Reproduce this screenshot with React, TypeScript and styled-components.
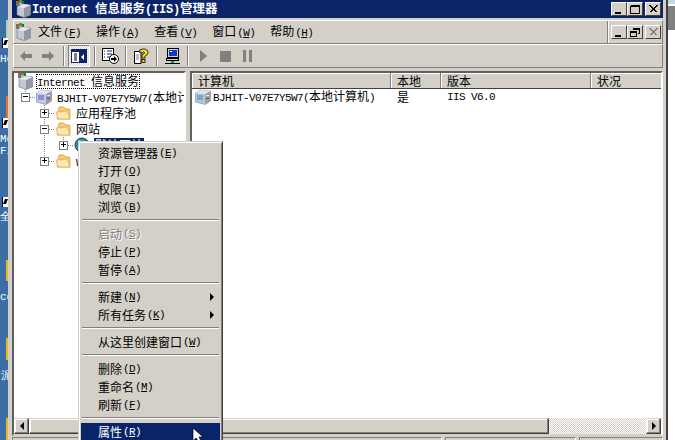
import React from "react";
import styled, { createGlobalStyle } from "styled-components";

const GlobalStyle = createGlobalStyle`
  html, body {
    margin: 0;
    padding: 0;
    background: #fff;
    overflow: hidden;
  }
  body {
    font-family: "Noto Sans CJK SC", "Liberation Sans", sans-serif;
    font-size: 12px;
    color: #000;
  }
  svg {
    flex: none;
  }
`;

const Screen = styled.div`
  position: relative;
  width: 675px;
  height: 440px;
  display: flex;
  overflow: hidden;
`;

const Desktop = styled.div`
  position: relative;
  width: 8px;
  flex: none;
  background: #3a6ea5;
  overflow: hidden;
`;

const DesktopLabel = styled.span<{ $top: number; $left?: number }>`
  position: absolute;
  top: ${(p) => p.$top}px;
  left: ${(p) => p.$left ?? 0}px;
  color: #fff;
  font-family: "Liberation Mono", monospace;
  font-size: 11px;
  line-height: 12px;
  white-space: nowrap;
`;

const DesktopIcon = styled.div<{ $top: number; $h: number; $color: string }>`
  position: absolute;
  top: ${(p) => p.$top}px;
  left: 6px;
  width: 2px;
  height: ${(p) => p.$h}px;
  background: ${(p) => p.$color};
`;

const Shortcut = styled.div<{ $top: number }>`
  position: absolute;
  top: ${(p) => p.$top}px;
  left: 2px;
  width: 6px;
  height: 10px;
  background: #fff;
  border-left: 1px solid #000;
  box-sizing: border-box;
  &::after {
    content: "";
    position: absolute;
    left: 1px;
    top: 2px;
    width: 3px;
    height: 5px;
    background: #000;
    transform: skewX(-20deg);
  }
`;

const RightEdge = styled.div`
  flex: 1;
  background: #fff;
  display: flex;
  flex-direction: column;
`;

const EdgeBlue = styled.div`
  height: 4px;
  background: #c9d6ea;
`;

const EdgeGray = styled.div`
  height: 24px;
  margin-top: 2px;
  background: #808080;
`;

const Window = styled.div`
  width: 660px;
  flex: none;
  box-sizing: border-box;
  padding: 0 3px 0 4px;
  background: #d4d0c8;
  border-right: 2px solid #404040;
  display: flex;
  flex-direction: column;
`;

const TitleBar = styled.div`
  height: 18px;
  flex: none;
  background: #0a246a;
  display: flex;
  align-items: center;
  padding: 0 2px 0 3px;
`;

const TitleText = styled.span`
  margin-left: 1px;
  color: #fff;
  font-weight: 700;
  font-size: 12.5px;
  line-height: 18px;
  white-space: nowrap;
`;

const TitleLatin = styled.span`
  font-family: "Liberation Mono", monospace;
  font-size: 12px;
  font-weight: 700;
  letter-spacing: -0.2px;
`;

const CaptionButtons = styled.div`
  margin-left: auto;
  display: flex;
`;

const CaptionButton = styled.div<{ $gap?: boolean }>`
  width: 16px;
  height: 14px;
  box-sizing: border-box;
  margin-left: ${(p) => (p.$gap ? 2 : 0)}px;
  background: #d4d0c8;
  border: 1px solid;
  border-color: #fff #404040 #404040 #fff;
  display: flex;
  align-items: center;
  justify-content: center;
`;

const MenuBar = styled.div`
  height: 24px;
  margin: 2px 0 0 1px;
  flex: none;
  box-sizing: border-box;
  border-top: 1px solid #fff;
  border-left: 1px solid #fff;
  border-bottom: 1px solid #808080;
  border-right: 1px solid #808080;
  display: flex;
  align-items: center;
  padding-left: 1px;
`;

const MenuItems = styled.div`
  display: flex;
  gap: 15px;
  margin-left: 7px;
`;

const MenuLabel = styled.span`
  line-height: 16px;
  white-space: nowrap;
`;

const MdiBox = styled.div`
  margin-left: auto;
  align-self: stretch;
  width: 55px;
  box-sizing: border-box;
  border-left: 1px solid #808080;
  box-shadow: inset 1px 0 0 #fff;
  display: flex;
  align-items: center;
  padding-left: 3px;
`;

const MdiButton = styled(CaptionButton)`
  width: 16px;
  height: 14px;
`;

const ToolBar = styled.div`
  height: 24px;
  margin-left: 1px;
  flex: none;
  box-sizing: border-box;
  border-top: 1px solid #fff;
  border-left: 1px solid #fff;
  border-bottom: 1px solid #808080;
  border-right: 1px solid #808080;
  display: flex;
  align-items: center;
  padding-left: 1px;
`;

const ToolButton = styled.div<{ $pressed?: boolean }>`
  width: 22px;
  height: 22px;
  flex: none;
  box-sizing: border-box;
  display: flex;
  align-items: center;
  justify-content: center;
  ${(p) =>
    p.$pressed
      ? `
    border: 1px solid;
    border-color: #808080 #fff #fff #808080;
    background: repeating-conic-gradient(#d4d0c8 0 25%, #fff 0 50%) 0 0 / 2px 2px;
  `
      : ""}
`;

const ToolSep = styled.div`
  width: 2px;
  height: 20px;
  flex: none;
  margin: 0 3px 0 4px;
  border-left: 1px solid #808080;
  border-right: 1px solid #fff;
  box-sizing: border-box;
`;

const Panes = styled.div`
  height: 365px;
  margin-top: 3px;
  flex: none;
  display: flex;
  gap: 4px;
`;

const Sunken = styled.div`
  box-sizing: border-box;
  border: 2px solid;
  border-color: #606060 #fff #d4d0c8 #606060;
  display: flex;
  flex-direction: column;
  overflow: hidden;
  background: #fff;
`;

const TreePane = styled(Sunken)`
  width: 174px;
  flex: none;
`;

const ListPane = styled(Sunken)`
  flex: 1;
  min-width: 0;
`;

const TreeBody = styled.div`
  position: relative;
  flex: 1;
  min-height: 0;
  overflow: hidden;
`;

const TreeLines = styled.svg`
  position: absolute;
  left: 0;
  top: 0;
`;

const TreeRow = styled.div<{ $level: number }>`
  position: relative;
  height: 16px;
  display: flex;
  align-items: center;
  white-space: nowrap;
  padding-left: ${(p) => (p.$level === 0 ? 3 : 7 + (p.$level - 1) * 19)}px;
`;

const Expander = styled.div`
  width: 9px;
  height: 9px;
  flex: none;
  box-sizing: border-box;
  margin-right: 6px;
  border: 1px solid #808080;
  background: #fff;
  display: flex;
  align-items: center;
  justify-content: center;
`;

const NodeText = styled.span<{ $focus?: boolean; $selected?: boolean }>`
  line-height: 14px;
  height: 15px;
  flex: none;
  box-sizing: border-box;
  padding: 0 1px;
  margin-left: ${(p) => (p.$focus ? 3 : 4)}px;
  ${(p) => (p.$focus ? "outline: 1px dotted #000; outline-offset: -1px;" : "")}
  ${(p) => (p.$selected ? "background: #0a246a; color: #fff;" : "")}
`;

const HeaderRow = styled.div`
  height: 15px;
  flex: none;
  display: flex;
  border-bottom: 1px solid #404040;
  background: #d4d0c8;
`;

const HeaderCell = styled.div<{ $w: number }>`
  width: ${(p) => p.$w}px;
  flex: none;
  box-sizing: border-box;
  padding-left: 6px;
  line-height: 15px;
  border-right: 1px solid #808080;
  box-shadow: inset 1px 1px 0 #fff;
  white-space: nowrap;
  &:last-child {
    flex: 1;
    border-right: none;
  }
`;

const ListBody = styled.div`
  flex: 1;
  min-height: 0;
`;

const ListRow = styled.div`
  height: 16px;
  display: flex;
  align-items: center;
`;

const ListCell = styled.div<{ $w: number }>`
  width: ${(p) => p.$w}px;
  flex: none;
  box-sizing: border-box;
  padding-left: 6px;
  line-height: 16px;
  display: flex;
  align-items: center;
  white-space: nowrap;
`;

const FirstCell = styled(ListCell)`
  padding-left: 3px;
  gap: 2px;
`;

const ScrollBar = styled.div`
  height: 16px;
  flex: none;
  display: flex;
  background: repeating-conic-gradient(#d4d0c8 0 25%, #fff 0 50%) 0 0 / 2px 2px;
`;

const ScrollButton = styled.div`
  width: 15px;
  flex: none;
  box-sizing: border-box;
  background: #d4d0c8;
  border: 1px solid;
  border-color: #d4d0c8 #404040 #404040 #fff;
  box-shadow: inset -1px -1px 0 #808080, inset 1px 1px 0 #fff;
  display: flex;
  align-items: center;
  justify-content: center;
`;

const ScrollThumb = styled(ScrollButton)<{ $w: number }>`
  width: ${(p) => p.$w}px;
`;

const ScrollTrack = styled.div`
  flex: 1;
`;

const ScrollArrow = styled.div<{ $right?: boolean }>`
  width: 0;
  height: 0;
  border-top: 4px solid transparent;
  border-bottom: 4px solid transparent;
  ${(p) =>
    p.$right ? "border-left: 4px solid #000;" : "border-right: 4px solid #000;"}
`;

const StatusBar = styled.div`
  flex: 1;
  margin-top: 1px;
  display: flex;
  gap: 3px;
`;

const StatusCell = styled.div<{ $w?: number }>`
  ${(p) => (p.$w ? `width: ${p.$w}px; flex: none;` : "flex: 1;")}
  box-sizing: border-box;
  border-top: 1px solid #808080;
  border-left: 1px solid #808080;
  border-right: 1px solid #fff;
`;

const ContextMenu = styled.div`
  position: absolute;
  left: 78px;
  top: 141px;
  width: 145px;
  height: 304px;
  box-sizing: border-box;
  padding: 2px 1px 0 1px;
  background: #d4d0c8;
  border: 1px solid;
  border-color: #d4d0c8 #404040 #404040 #d4d0c8;
  box-shadow: inset 1px 1px 0 #fff, inset -1px -1px 0 #808080;
  display: flex;
  flex-direction: column;
`;

const MenuRow = styled.div<{ $active?: boolean; $disabled?: boolean }>`
  position: relative;
  flex: none;
  height: 18px;
  margin: 0 1px 0 1px;
  padding-left: 17px;
  line-height: 18px;
  white-space: nowrap;
  display: flex;
  align-items: center;
  ${(p) => (p.$active ? "background: #0a246a; color: #fff;" : "")}
  ${(p) =>
    p.$disabled ? "color: #808080; text-shadow: 1px 1px 0 #fff;" : ""}
`;

const MenuSep = styled.div`
  flex: none;
  height: 2px;
  margin: 3px 2px 4px 2px;
  background: #808080;
  border-bottom: 1px solid #fff;
  box-sizing: border-box;
`;

const Submenu = styled.div`
  position: absolute;
  right: 6px;
  top: 5px;
  width: 0;
  height: 0;
  border-top: 4px solid transparent;
  border-bottom: 4px solid transparent;
  border-left: 4px solid #000;
`;

const Pointer = styled.svg`
  position: absolute;
  left: 113px;
  top: 286px;
`;

const Latin = styled.span`
  font-family: "Liberation Mono", monospace;
  font-size: 11px;
  letter-spacing: -0.6px;
`;

const AccelText = styled(Latin)`
  margin-left: 1px;
`;

const Accel: React.FC<{ k: string }> = ({ k }) => (
  <AccelText>
    (<u>{k}</u>)
  </AccelText>
);

const ServerIcon: React.FC = () => (
  <svg width="16" height="16" viewBox="0 0 16 16">
    <path d="M0.5 4 L6 1 L15.5 2 L15.5 12 L10 15.5 L0.5 13 Z" fill="#c6c6e6" stroke="#7d7da8" strokeWidth="0.6" />
    <path d="M10 5 L15.5 2 L15.5 12 L10 15.5 Z" fill="#9a9aa8" />
    <path d="M0.5 4 L6 1 L15.5 2 L10 5 Z" fill="#e4e4f4" />
    <rect x="2" y="6" width="6" height="5" fill="#8e8ed8" />
    <rect x="11" y="6" width="3" height="1" fill="#e8e8e8" />
    <rect x="11" y="9" width="3" height="1" fill="#50505a" />
  </svg>
);

const ListServerIcon: React.FC = () => (
  <svg width="16" height="16" viewBox="0 0 16 16">
    <path d="M0.5 4 L6 1 L15.5 2 L15.5 12 L10 15.5 L0.5 13 Z" fill="#b4c8da" stroke="#70879c" strokeWidth="0.6" />
    <path d="M10 5 L15.5 2 L15.5 12 L10 15.5 Z" fill="#9aa2a8" />
    <path d="M0.5 4 L6 1 L15.5 2 L10 5 Z" fill="#e0e8f0" />
    <rect x="2" y="6" width="6" height="5" fill="#7da6c6" />
    <rect x="11" y="6" width="3" height="1" fill="#e8e8e8" />
    <rect x="11" y="9" width="3" height="1" fill="#50505a" />
  </svg>
);

const IisIcon: React.FC = () => (
  <svg width="16" height="18" viewBox="0 0 16 18">
    <path d="M2 7 L8 4 L15.5 5 L15.5 15 L9 17.5 L2 15 Z" fill="#c4c8d8" stroke="#6a6e78" strokeWidth="0.6" />
    <path d="M9 8 L15.5 5 L15.5 15 L9 17.5 Z" fill="#9498a4" />
    <path d="M2 7 L8 4 L15.5 5 L9 8 Z" fill="#e6e8f0" />
    <rect x="1" y="1" width="3" height="3" fill="#d04a30" />
    <rect x="4" y="0" width="3" height="3" fill="#30a060" />
    <rect x="1" y="4" width="3" height="2" fill="#2f7fc0" />
    <rect x="4" y="3" width="3" height="2" fill="#e0b030" />
    <rect x="7" y="1" width="2" height="3" fill="#20705a" />
  </svg>
);

const FolderIcon: React.FC = () => (
  <svg width="16" height="16" viewBox="0 0 16 16">
    <path d="M4 2 L9 2 L10 4 L15 4 L15 14 L2 14 Z" fill="#f6cd72" stroke="#c89a40" strokeWidth="0.7" />
    <path d="M1 7 L12 6 L15 14 L3 14 Z" fill="#ffe8ae" stroke="#d8a850" strokeWidth="0.7" />
  </svg>
);

const GlobeIcon: React.FC = () => (
  <svg width="16" height="16" viewBox="0 0 16 16">
    <circle cx="8" cy="8" r="7" fill="#2b8f96" stroke="#1b3f5a" strokeWidth="1" />
    <path d="M4 3 L9 4 L8 8 L4 7 Z" fill="#9fdcc8" />
  </svg>
);

const BackIcon: React.FC<{ flip?: boolean }> = ({ flip }) => (
  <svg width="14" height="12" viewBox="0 0 14 12">
    <path
      d={flip ? "M1 4 L8 4 L8 1 L13 6 L8 11 L8 8 L1 8 Z" : "M13 4 L6 4 L6 1 L1 6 L6 11 L6 8 L13 8 Z"}
      fill="#808080"
    />
  </svg>
);

const ConsoleTreeIcon: React.FC = () => (
  <svg width="16" height="14" viewBox="0 0 16 14">
    <rect x="0.5" y="0.5" width="15" height="13" fill="#fff" stroke="#0a246a" />
    <rect x="1" y="1" width="14" height="2" fill="#0a246a" />
    <rect x="8" y="3" width="7" height="10" fill="#0a246a" />
    <path d="M3 5 H6 M3 7 H6 M3 9 H6 M3 11 H6" stroke="#000" />
    <path d="M13 5 L10 8 L13 11 Z" fill="#fff" />
  </svg>
);

const ExportIcon: React.FC = () => (
  <svg width="17" height="16" viewBox="0 0 17 16">
    <rect x="0.5" y="0.5" width="11" height="12" fill="#fff" stroke="#000" />
    <path d="M2 3 H3 M5 3 H10 M2 6 H3 M5 6 H10 M2 9 H3 M5 9 H8" stroke="#0a246a" />
    <circle cx="12" cy="11" r="4.5" fill="#fff" stroke="#000" />
    <path d="M9 10 H12 V8 L15 11 L12 14 V12 H9 Z" fill="#000" />
  </svg>
);

const HelpIcon: React.FC = () => (
  <svg width="15" height="16" viewBox="0 0 15 16">
    <path d="M0.5 3.5 H7 V15.5 H0.5 Z" fill="#fff" stroke="#000" />
    <path d="M2 7 H5 M2 9 H5 M2 11 H5" stroke="#808080" />
    <path
      d="M5 4 Q5 1 9 1 Q14 1 14 4.5 Q14 7 11 8 L11 10 L8 10 L8 6.5 Q11 6 10.5 4.5 Q10 3.5 8.5 4.5 Z"
      fill="#f8e020"
      stroke="#000"
      strokeWidth="0.8"
    />
    <rect x="8" y="11.5" width="3" height="3" fill="#f8e020" stroke="#000" strokeWidth="0.8" />
  </svg>
);

const ComputerIcon: React.FC = () => (
  <svg width="17" height="16" viewBox="0 0 17 16">
    <rect x="3.5" y="0.5" width="11" height="9" fill="#d4d0c8" stroke="#000" />
    <rect x="5" y="2" width="8" height="6" fill="#0a3ac8" />
    <rect x="6" y="3" width="2" height="1" fill="#fff" />
    <rect x="2.5" y="10.5" width="12" height="2" fill="#d4d0c8" stroke="#000" />
    <path d="M8.5 13 V15 M1 15.5 H16" stroke="#000" />
    <rect x="7" y="13" width="3" height="2" fill="#20a040" />
  </svg>
);

const PlayIcon: React.FC = () => (
  <svg width="9" height="14" viewBox="0 0 9 14">
    <path d="M1 1 L8 7 L1 13 Z" fill="#808080" />
  </svg>
);

const StopIcon: React.FC = () => (
  <svg width="11" height="11" viewBox="0 0 11 11">
    <rect width="11" height="11" fill="#808080" />
  </svg>
);

const PauseIcon: React.FC = () => (
  <svg width="9" height="12" viewBox="0 0 9 12">
    <rect x="0" width="3" height="12" fill="#808080" />
    <rect x="6" width="3" height="12" fill="#808080" />
  </svg>
);

const Glyph: React.FC<{ d: string; color?: string }> = ({ d, color = "#000" }) => (
  <svg width="10" height="9" viewBox="0 0 10 9">
    <path d={d} fill="none" stroke={color} strokeWidth="1" shapeRendering="crispEdges" />
  </svg>
);

const GLYPH_MIN = "M1 7.5 H7 M1 8.5 H7";
const GLYPH_MAX = "M0.5 1.5 H9.5 V8.5 H0.5 Z M0.5 0.5 H9.5";
const GLYPH_CLOSE = "M1.5 0.5 L8.5 7.5 M2.5 0.5 L9.5 7.5 M8.5 0.5 L1.5 7.5 M9.5 0.5 L2.5 7.5";
const GLYPH_RESTORE = "M3.5 1.5 V0.5 H9.5 V5.5 H7.5 M3.5 1.5 H9.5 M0.5 3.5 H6.5 V8.5 H0.5 Z M0.5 4.5 H6.5";

const menus = [
  ["文件", "F"],
  ["操作", "A"],
  ["查看", "V"],
  ["窗口", "W"],
  ["帮助", "H"],
];

type Entry =
  | { sep: true }
  | { label: string; k: string; disabled?: boolean; sub?: boolean; active?: boolean };

const entries: Entry[] = [
  { label: "资源管理器", k: "E" },
  { label: "打开", k: "O" },
  { label: "权限", k: "I" },
  { label: "浏览", k: "B" },
  { sep: true },
  { label: "启动", k: "S", disabled: true },
  { label: "停止", k: "P" },
  { label: "暂停", k: "A" },
  { sep: true },
  { label: "新建", k: "N", sub: true },
  { label: "所有任务", k: "K", sub: true },
  { sep: true },
  { label: "从这里创建窗口", k: "W" },
  { sep: true },
  { label: "删除", k: "D" },
  { label: "重命名", k: "M" },
  { label: "刷新", k: "F" },
  { sep: true },
  { label: "属性", k: "R", active: true },
];

const Plus = () => <Glyph d="M2 3.5 H7 M4.5 1 V6" />;

const App: React.FC = () => {
  return (
    <Screen>
      <GlobalStyle />
      <Desktop>
        <DesktopIcon $top={20} $h={18} $color="#a8d8b0" />
        <Shortcut $top={38} />
        <DesktopLabel $top={53}>He</DesktopLabel>
        <DesktopIcon $top={96} $h={22} $color="#e8702a" />
        <Shortcut $top={118} />
        <DesktopLabel $top={133}>Mo</DesktopLabel>
        <DesktopLabel $top={145}>Fi</DesktopLabel>
        <Shortcut $top={197} />
        <DesktopLabel $top={211}>全</DesktopLabel>
        <DesktopIcon $top={260} $h={21} $color="#e8b820" />
        <DesktopLabel $top={291}>co</DesktopLabel>
        <DesktopIcon $top={338} $h={22} $color="#e8b820" />
        <DesktopLabel $top={370} $left={1}>泥</DesktopLabel>
        <DesktopIcon $top={418} $h={22} $color="#e8b820" />
      </Desktop>

      <Window>
        <TitleBar>
          <IisIcon />
          <TitleText>
            <TitleLatin>Internet </TitleLatin>信息服务<TitleLatin>(IIS)</TitleLatin>管理器
          </TitleText>
          <CaptionButtons>
            <CaptionButton><Glyph d={GLYPH_MIN} /></CaptionButton>
            <CaptionButton><Glyph d={GLYPH_MAX} /></CaptionButton>
            <CaptionButton $gap><Glyph d={GLYPH_CLOSE} /></CaptionButton>
          </CaptionButtons>
        </TitleBar>

        <MenuBar>
          <IisIcon />
          <MenuItems>
            {menus.map(([label, k]) => (
              <MenuLabel key={k}>
                {label}
                <Accel k={k} />
              </MenuLabel>
            ))}
          </MenuItems>
          <MdiBox>
            <MdiButton><Glyph d={GLYPH_MIN} /></MdiButton>
            <MdiButton><Glyph d={GLYPH_RESTORE} /></MdiButton>
            <MdiButton $gap><Glyph d={GLYPH_CLOSE} color="#808080" /></MdiButton>
          </MdiBox>
        </MenuBar>

        <ToolBar>
          <ToolButton><BackIcon /></ToolButton>
          <ToolButton><BackIcon flip /></ToolButton>
          <ToolSep />
          <ToolButton $pressed><ConsoleTreeIcon /></ToolButton>
          <ToolSep />
          <ToolButton><ExportIcon /></ToolButton>
          <ToolSep />
          <ToolButton><HelpIcon /></ToolButton>
          <ToolSep />
          <ToolButton><ComputerIcon /></ToolButton>
          <ToolSep />
          <ToolButton><PlayIcon /></ToolButton>
          <ToolButton><StopIcon /></ToolButton>
          <ToolButton><PauseIcon /></ToolButton>
        </ToolBar>

        <Panes>
          <TreePane>
            <TreeBody>
              <TreeLines width="170" height="120">
                <path
                  d="M11.5 16 V20 M16 24.5 H22 M30.5 32 V88 M35 40.5 H40 M35 56.5 H40 M35 88.5 H40 M49.5 64 V68 M54 72.5 H59"
                  fill="none"
                  stroke="#808080"
                  strokeDasharray="1 1"
                />
              </TreeLines>
              <TreeRow $level={0}>
                <IisIcon />
                <NodeText $focus>
                  <Latin>Internet </Latin>信息服务
                </NodeText>
              </TreeRow>
              <TreeRow $level={1}>
                <Expander><Glyph d="M2 3.5 H7" /></Expander>
                <ServerIcon />
                <NodeText>
                  <Latin>BJHIT-V07E7Y5W7(</Latin>本地计算机<Latin>)</Latin>
                </NodeText>
              </TreeRow>
              <TreeRow $level={2}>
                <Expander><Plus /></Expander>
                <FolderIcon />
                <NodeText>应用程序池</NodeText>
              </TreeRow>
              <TreeRow $level={2}>
                <Expander><Glyph d="M2 3.5 H7" /></Expander>
                <FolderIcon />
                <NodeText>网站</NodeText>
              </TreeRow>
              <TreeRow $level={3}>
                <Expander><Plus /></Expander>
                <GlobeIcon />
                <NodeText $selected>默认网站</NodeText>
              </TreeRow>
              <TreeRow $level={2}>
                <Expander><Plus /></Expander>
                <FolderIcon />
                <NodeText>
                  <Latin>Web </Latin>服务扩展
                </NodeText>
              </TreeRow>
            </TreeBody>
            <ScrollBar>
              <ScrollButton><ScrollArrow /></ScrollButton>
              <ScrollThumb $w={153} />
            </ScrollBar>
          </TreePane>

          <ListPane>
            <HeaderRow>
              <HeaderCell $w={199}>计算机</HeaderCell>
              <HeaderCell $w={50}>本地</HeaderCell>
              <HeaderCell $w={150}>版本</HeaderCell>
              <HeaderCell $w={70}>状况</HeaderCell>
            </HeaderRow>
            <ListBody>
              <ListRow>
                <FirstCell $w={199}>
                  <ListServerIcon />
                  <span>
                    <Latin>BJHIT-V07E7Y5W7(</Latin>本地计算机<Latin>)</Latin>
                  </span>
                </FirstCell>
                <ListCell $w={50}>是</ListCell>
                <ListCell $w={150}>
                  <Latin>IIS V6.0</Latin>
                </ListCell>
              </ListRow>
            </ListBody>
            <ScrollBar>
              <ScrollButton><ScrollArrow /></ScrollButton>
              <ScrollThumb $w={342} />
              <ScrollTrack />
              <ScrollButton><ScrollArrow $right /></ScrollButton>
            </ScrollBar>
          </ListPane>
        </Panes>

        <StatusBar>
          <StatusCell $w={430} />
          <StatusCell $w={131} />
          <StatusCell />
        </StatusBar>
      </Window>

      <RightEdge>
        <EdgeBlue />
        <EdgeGray />
      </RightEdge>

      <ContextMenu>
        {entries.map((e, i) =>
          "sep" in e ? (
            <MenuSep key={i} />
          ) : (
            <MenuRow key={e.label} $active={e.active} $disabled={e.disabled}>
              {e.label}
              <Accel k={e.k} />
              {e.sub && <Submenu />}
            </MenuRow>
          )
        )}
        <Pointer width="14" height="14" viewBox="0 0 14 14">
          <path d="M1 0 L1 13 L4 10 L7 14 L9 13 L7 9 L11 9 Z" fill="#fff" stroke="#000" strokeWidth="0.7" />
        </Pointer>
      </ContextMenu>
    </Screen>
  );
};

export default App;
